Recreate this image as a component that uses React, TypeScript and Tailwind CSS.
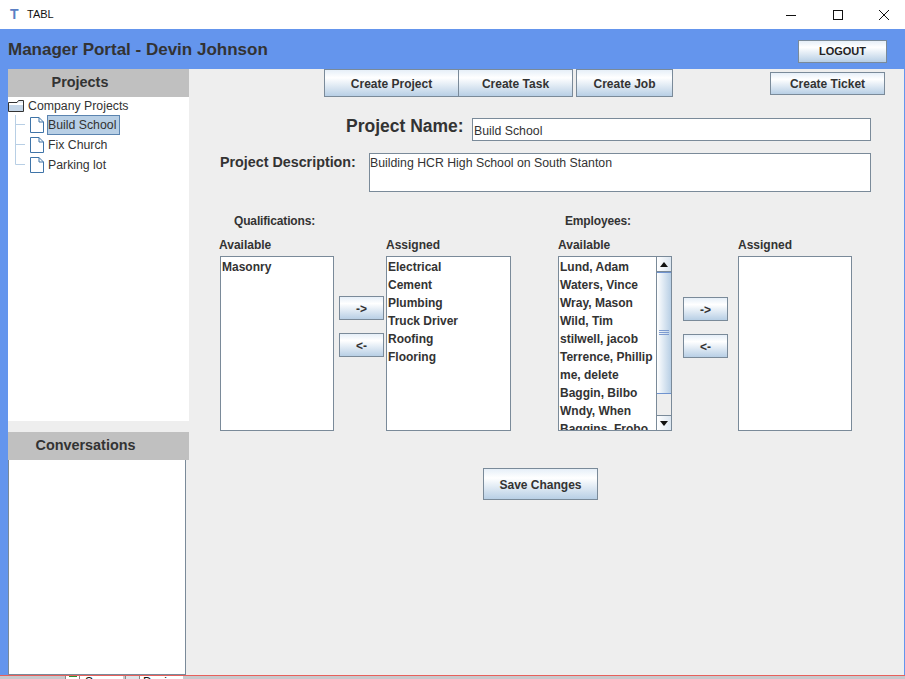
import { FC, ReactNode } from "react";

const Btn: FC<{ className?: string; children: ReactNode }> = ({ className, children }) => (
  <button className={`flex items-center justify-center border border-[#7a8a99] bg-gradient-to-b from-[#e6eff8] via-[#ffffff] via-30% to-[#b8cfe5] pt-[2px] text-[12px] font-bold text-[#333333] ${className ?? ""}`}>
    {children}
  </button>
);

const ListBox: FC<{ items: string[]; className?: string }> = ({ items, className }) => (
  <div className={`h-[175px] overflow-hidden border border-[#7a8a99] bg-white pl-[1px] pt-[1px] text-[12px] font-bold text-[#333333] ${className ?? ""}`}>
    {items.map((item) => (
      <div key={item} className="h-[18px] whitespace-nowrap leading-[18px]">{item}</div>
    ))}
  </div>
);

const FileIcon = () => (
  <svg width="14" height="16" viewBox="0 0 14 16" className="shrink-0">
    <path d="M0.5 0.5H9L13.5 5V15.5H0.5Z" fill="#fff" stroke="#3f74a8" />
    <path d="M9 0.5V5H13.5" fill="none" stroke="#3f74a8" />
  </svg>
);

const FolderIcon = () => (
  <svg width="16" height="12" viewBox="0 0 16 12" className="shrink-0">
    <path d="M0.5 2.5H9L10.5 0.5H15.5V11.5H0.5Z" fill="#e8eef5" stroke="#333" />
    <path d="M1 3H15V5H1Z" fill="#ffffff" />
    <path d="M1 5H15V11H1Z" fill="#c5d6e8" />
  </svg>
);

const Connector: FC<{ last?: boolean }> = ({ last }) => (
  <svg width="10" height="20" viewBox="0 0 10 20" className="shrink-0">
    <path d={last ? "M0.5 0V9.5H10" : "M0.5 0V20M0.5 9.5H10"} fill="none" stroke="#b8cfe5" />
  </svg>
);

const MoveButtons: FC<{ className?: string }> = ({ className }) => (
  <div className={`flex w-[45px] flex-col gap-[13px] ${className ?? ""}`}>
    <Btn className="h-[24px] w-[45px]">-&gt;</Btn>
    <Btn className="h-[24px] w-[45px]">&lt;-</Btn>
  </div>
);

const employees = ["Lund, Adam", "Waters, Vince", "Wray, Mason", "Wild, Tim", "stilwell, jacob", "Terrence, Phillip", "me, delete", "Baggin, Bilbo", "Wndy, When", "Baggins, Frobo"];

const App: FC = () => {
  return (
    <div className="flex h-[679px] w-[905px] flex-col overflow-hidden bg-white font-['Liberation_Sans',sans-serif]">
      {/* title bar */}
      <div className="flex h-[29px] shrink-0 items-center bg-white">
        <span className="ml-[10px] w-[17px] text-[14px] font-bold text-[#5b7fc4]">T</span>
        <span className="text-[11px] text-[#111]">TABL</span>
        <div className="ml-auto flex items-center">
          <svg width="12" height="12" viewBox="0 0 12 12" className="mr-[35px]"><path d="M1 6.5H11" stroke="#111" /></svg>
          <svg width="12" height="12" viewBox="0 0 12 12" className="mr-[34px]"><rect x="1.5" y="1.5" width="9" height="9" fill="none" stroke="#111" /></svg>
          <svg width="12" height="12" viewBox="0 0 12 12" className="mr-[15px]"><path d="M1 1L11 11M11 1L1 11" stroke="#111" /></svg>
        </div>
      </div>

      {/* header */}
      <div className="flex h-[40px] shrink-0 items-center bg-[#6495ed] pl-[8px] pr-[18px]">
        <h1 className="pt-[2px] text-[17px] font-bold text-[#333333]">Manager Portal - Devin Johnson</h1>
        <Btn className="ml-auto mt-[5px] h-[23px] w-[89px] !pt-0 !text-[11px] !text-[#222]">LOGOUT</Btn>
      </div>

      <div className="flex min-h-0 flex-1 bg-[#6495ed] pl-[8px] pr-[1px]">
        {/* sidebar */}
        <div className="flex w-[181px] shrink-0 flex-col bg-[#eeeeee]">
          <div className="flex h-[28px] shrink-0 items-center justify-center bg-[#c0c0c0] pr-[37px] text-[14.4px] font-bold text-[#333333]">Projects</div>
          <div className="h-[324px] shrink-0 bg-white text-[12.3px] text-[#333333]">
            <div className="flex h-[18px] items-center gap-[4px]">
              <FolderIcon />
              <span>Company Projects</span>
            </div>
            <div className="ml-[7px] flex h-[20px] items-center">
              <Connector />
              <span className="ml-[5px]"><FileIcon /></span>
              <span className="ml-[3px] h-[20px] border border-[#5b84b0] bg-[#b8cfe5] pr-[3px] leading-[18px]">Build School</span>
            </div>
            <div className="ml-[7px] flex h-[20px] items-center">
              <Connector />
              <span className="ml-[5px]"><FileIcon /></span>
              <span className="ml-[4px]">Fix Church</span>
            </div>
            <div className="ml-[7px] flex h-[20px] items-center">
              <Connector last />
              <span className="ml-[5px]"><FileIcon /></span>
              <span className="ml-[4px]">Parking lot</span>
            </div>
          </div>
          <div className="mt-[11px] flex h-[28px] shrink-0 items-center justify-center bg-[#c0c0c0] pr-[26px] text-[14.4px] font-bold text-[#333333]">Conversations</div>
          <div className="mr-[3px] h-[215px] shrink-0 border-x border-b border-[#7a8a99] bg-white" />
        </div>

        {/* main */}
        <div className="min-w-0 flex-1 bg-[#eeeeee]">
          <div className="flex items-start pl-[135px] pr-[19px]">
            <Btn className="h-[28px] w-[135px]">Create Project</Btn>
            <Btn className="-ml-[1px] h-[28px] w-[115px]">Create Task</Btn>
            <Btn className="ml-[3px] h-[28px] w-[97px]">Create Job</Btn>
            <Btn className="ml-auto mt-[3px] h-[23px] w-[115px] !pt-0">Create Ticket</Btn>
          </div>

          <div className="mt-[21px] flex items-start">
            <span className="ml-[157px] w-[126px] whitespace-nowrap text-[17.5px] font-bold leading-[17px] text-[#333333]">Project Name:</span>
            <div className="h-[23px] w-[399px] border border-[#7a8a99] bg-white pl-[1px] text-[12.3px] leading-[24px] text-[#333333]">Build School</div>
          </div>

          <div className="mt-[12px] flex items-start">
            <span className="ml-[31px] w-[149px] text-[14.3px] font-bold leading-[18px] text-[#333333]">Project Description:</span>
            <div className="h-[39px] w-[502px] border border-[#7a8a99] bg-white text-[12.3px] leading-[18px] text-[#333333]">Building HCR High School on South Stanton</div>
          </div>

          <div className="mt-[20px] flex text-[12px] font-bold tracking-[-0.15px] text-[#333333]">
            <span className="ml-[45px] w-[331px]">Qualifications:</span>
            <span>Employees:</span>
          </div>

          <div className="mt-[6px] flex items-start">
            <div className="ml-[30px] w-[115px]">
              <div className="h-[20px] text-[12px] font-bold text-[#333333]">Available</div>
              <ListBox items={["Masonry"]} className="ml-[1px] w-[114px]" />
            </div>
            <MoveButtons className="ml-[5px] mt-[60px]" />
            <div className="ml-[2px] w-[125px]">
              <div className="h-[20px] text-[12px] font-bold text-[#333333]">Assigned</div>
              <ListBox items={["Electrical", "Cement", "Plumbing", "Truck Driver", "Roofing", "Flooring"]} />
            </div>
            <div className="ml-[47px] w-[115px]">
              <div className="h-[20px] text-[12px] font-bold text-[#333333]">Available</div>
              <div className="flex h-[175px] w-[114px] overflow-hidden border border-[#7a8a99] bg-white">
                <div className="min-w-0 flex-1 pl-[1px] pt-[1px] text-[12px] font-bold text-[#333333]">
                  {employees.map((name) => (
                    <div key={name} className="h-[18px] whitespace-nowrap leading-[18px]">{name}</div>
                  ))}
                </div>
                <div className="flex w-[15px] shrink-0 flex-col border-l border-[#7a8a99] bg-[#eeeeee]">
                  <div className="flex h-[15px] items-center justify-center border-b border-[#7a8a99] bg-gradient-to-r from-white to-[#dce6f0]">
                    <svg width="8" height="5" viewBox="0 0 8 5"><path d="M4 0L8 5H0Z" fill="#111" /></svg>
                  </div>
                  <div className="flex h-[122px] items-center justify-center border-y border-[#6f93cf] bg-gradient-to-r from-[#ffffff] to-[#b8cfe5]">
                    <svg width="10" height="6" viewBox="0 0 10 6"><path d="M0 .5H10M0 2.5H10M0 4.5H10" stroke="#7d9bd0" /></svg>
                  </div>
                  <div className="flex-1" />
                  <div className="flex h-[15px] items-center justify-center border-t border-[#7a8a99] bg-gradient-to-r from-white to-[#dce6f0]">
                    <svg width="8" height="5" viewBox="0 0 8 5"><path d="M0 0H8L4 5Z" fill="#111" /></svg>
                  </div>
                </div>
              </div>
            </div>
            <MoveButtons className="ml-[10px] mt-[61px]" />
            <div className="ml-[10px] w-[114px]">
              <div className="h-[20px] text-[12px] font-bold text-[#333333]">Assigned</div>
              <ListBox items={[]} />
            </div>
          </div>

          <Btn className="ml-[294px] mt-[37px] h-[32px] w-[115px]">Save Changes</Btn>
        </div>
      </div>

      {/* sliver of the window behind */}
      <div className="flex h-[4px] shrink-0 items-start overflow-hidden border-t border-[#e8605c] bg-[#c8c8cc] text-[12px] leading-[12px] text-[#111]">
        <span className="ml-[65px] h-[3px] w-[15px] border-x border-[#888] bg-white">
          <span className="mx-auto block h-[1px] w-[8px] bg-[#2f8f2f]" />
        </span>
        <span className="w-[43px] bg-white pl-[5px]">Source</span>
        <span className="ml-[2px] h-[3px] w-[15px] border-x border-[#888] bg-[#dfe3e8]" />
        <span className="w-[43px] bg-white pl-[3px]">Design</span>
      </div>
    </div>
  );
};

export default App;
